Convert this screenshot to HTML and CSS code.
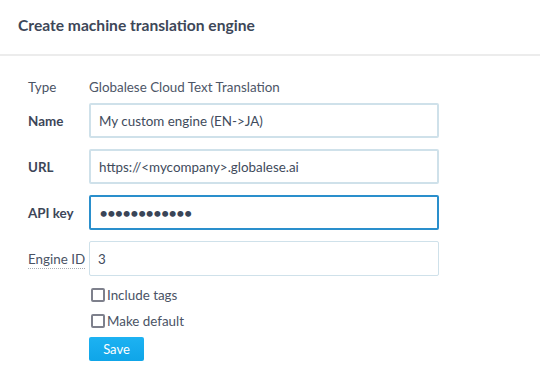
FILE: index.html
```html
<!DOCTYPE html>
<html>
<head>
<meta charset="utf-8">
<link rel="stylesheet" href="styles.css">
</head>
<body>
<div class="dialog">
  <div class="header">
    <h1 class="title">Create machine translation engine</h1>
  </div>
  <form class="form">
    <div class="row row-type">
      <span class="label">Type</span>
      <span class="value">Globalese Cloud Text Translation</span>
    </div>
    <div class="row row-input">
      <label class="label strong">Name</label>
      <input class="field" type="text" value="My custom engine (EN-&gt;JA)">
    </div>
    <div class="row row-input">
      <label class="label strong">URL</label>
      <input class="field" type="text" value="https://&lt;mycompany&gt;.globalese.ai">
    </div>
    <div class="row row-input">
      <label class="label strong">API key</label>
      <input class="field field-focus" type="password" value="abcdefghijkl">
    </div>
    <div class="row row-input row-last">
      <label class="label"><span class="dotted">Engine ID</span></label>
      <input class="field field-thin" type="text" value="3">
    </div>
    <div class="row row-check">
      <span class="spacer"></span>
      <label class="check"><span class="box"></span>Include tags</label>
    </div>
    <div class="row row-check">
      <span class="spacer"></span>
      <label class="check"><span class="box"></span>Make default</label>
    </div>
    <div class="row row-btn">
      <span class="spacer"></span>
      <button class="btn" type="button">Save</button>
    </div>
  </form>
</div>
</body>
</html>
```

FILE: styles.css
```css
* { box-sizing: border-box; }
html, body {
  margin: 0;
  padding: 0;
  background: #ffffff;
  font-family: Lato, "Open Sans", sans-serif;
  color: #465062;
}
.header {
  height: 56px;
  border-bottom: 2px solid #ececec;
  display: flex;
  align-items: center;
  padding: 0 18px 4px;
}
.title {
  margin: 0;
  font-size: 15.6px;
  font-weight: 700;
  color: #3d4758;
}
.form {
  display: flex;
  flex-direction: column;
  padding: 21px 0 0 28px;
}
.row {
  display: flex;
  align-items: center;
}
.label {
  width: 61px;
  flex: none;
  font-size: 13.4px;
  color: #4a5365;
}
.strong {
  font-weight: 700;
  color: #3d4658;
}
.spacer {
  width: 61px;
  flex: none;
}
.row-type {
  height: 20px;
  margin-bottom: 6px;
}
.value {
  font-size: 13.4px;
  color: #4d5667;
}
.row-input {
  height: 35px;
  margin-bottom: 11px;
}
.row-last {
  margin-bottom: 9px;
}
.field {
  width: 350px;
  height: 35px;
  border: 2px solid #cfe1ea;
  border-radius: 2px;
  padding: 0 8px;
  font-family: Lato, "Open Sans", sans-serif;
  font-size: 13.4px;
  color: #414b5c;
  background: #fff;
  outline: none;
}
.field-focus {
  border-color: #2a8fcc;
  font-size: 16px;
  letter-spacing: -1.6px;
  color: #3a4557;
}
.field-thin {
  border-width: 1px;
  padding-left: 8px;
}
.dotted {
  border-bottom: 1px dotted #a8adb5;
  padding-bottom: 1px;
}
.row-check {
  height: 20px;
  margin-bottom: 6px;
}
.check {
  display: flex;
  align-items: center;
  font-size: 13.4px;
  color: #4a5365;
  padding-left: 2px;
}
.box {
  width: 14px;
  height: 14px;
  border: 2px solid #7e808c;
  border-radius: 2px;
  margin-right: 2px;
  background: #fff;
}
.row-btn {
  height: 24px;
}
.btn {
  width: 55px;
  height: 24px;
  border: none;
  border-radius: 2px;
  background: linear-gradient(#1db2f2, #0fa5e8);
  color: #fff;
  font-family: Lato, "Open Sans", sans-serif;
  font-size: 13px;
  padding: 0;
}
```
